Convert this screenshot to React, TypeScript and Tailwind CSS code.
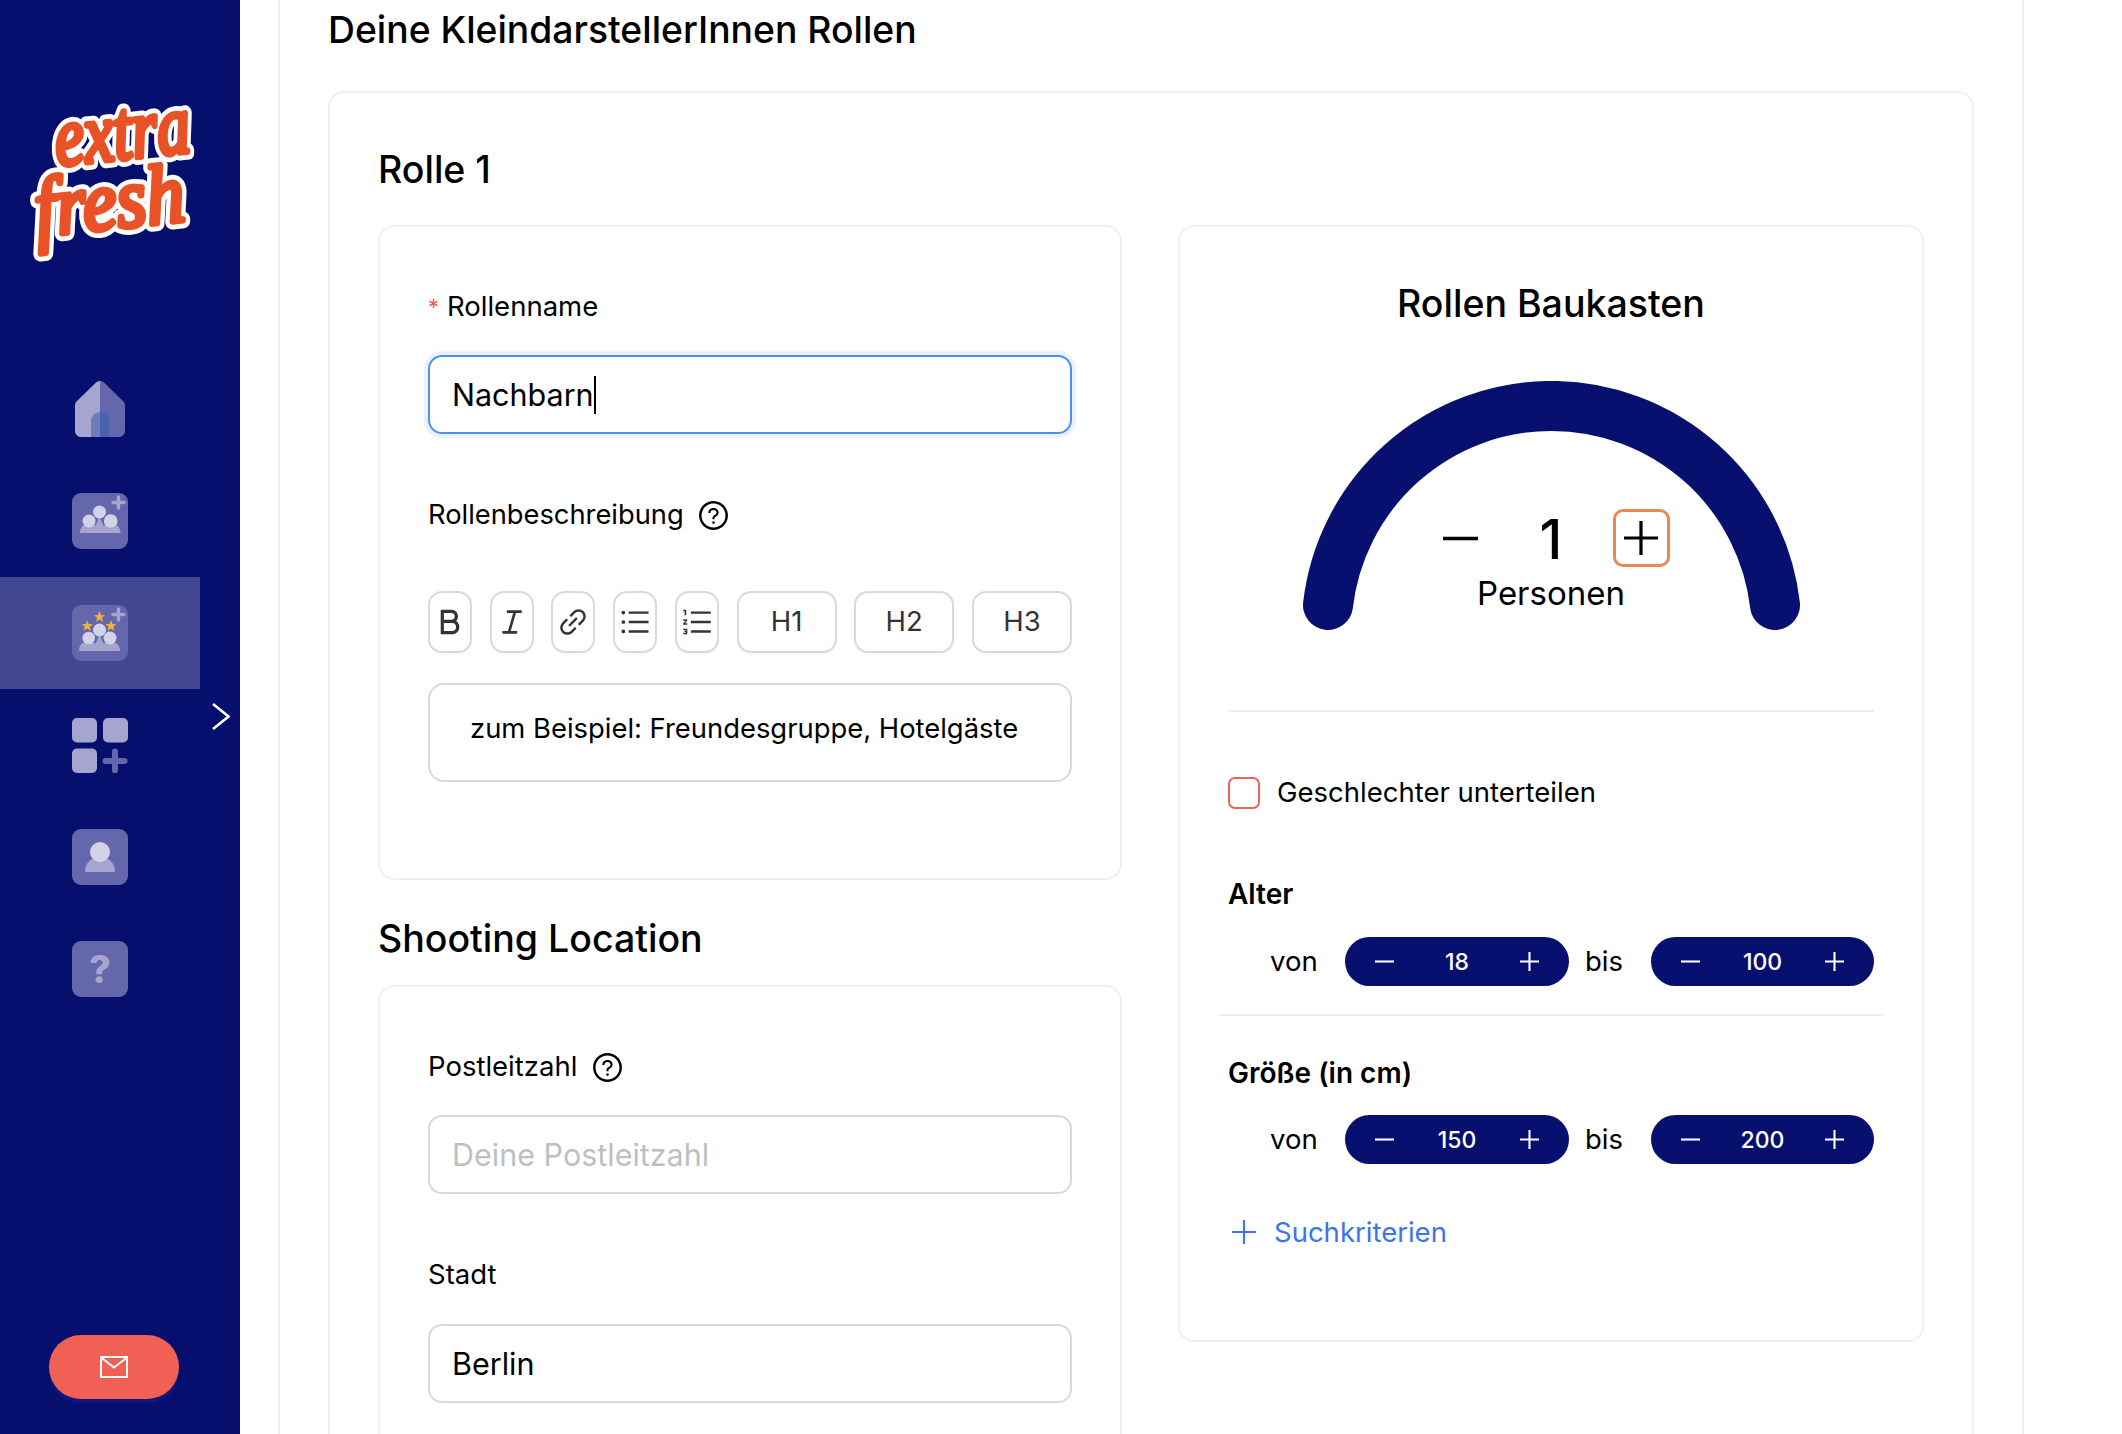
import { ReactNode } from 'react';
import {
  AiOutlineBold,
  AiOutlineItalic,
  AiOutlineLink,
  AiOutlineUnorderedList,
  AiOutlineOrderedList,
  AiOutlineQuestionCircle,
} from 'react-icons/ai';

const LIGHT = '#a5a5cf';
const MID = '#6467ab';
const PALE = '#d3d3e8';

function Logo() {
  const letters = { fontFamily: '"Liberation Serif", serif', fontStyle: 'italic', fontWeight: 400 };
  return (
    <svg width="240" height="353" viewBox="0 0 240 353" className="block">
      <g transform="rotate(-6 113 180)" style={letters} fontSize="84" strokeLinejoin="round" strokeLinecap="round">
        <text x="59" y="160" fill="#fff" stroke="#fff" strokeWidth="15" textLength="136" lengthAdjust="spacingAndGlyphs">extra</text>
        <text x="32" y="228" fill="#fff" stroke="#fff" strokeWidth="15" textLength="150" lengthAdjust="spacingAndGlyphs">fresh</text>
        <text x="59" y="160" fill="#e85226" stroke="#e85226" strokeWidth="5.500" textLength="136" lengthAdjust="spacingAndGlyphs">extra</text>
        <text x="32" y="228" fill="#e85226" stroke="#e85226" strokeWidth="5.500" textLength="150" lengthAdjust="spacingAndGlyphs">fresh</text>
      </g>
    </svg>
  );
}

function HomeIcon() {
  return (
    <svg width="50" height="56" viewBox="0 0 50 56">
      <path d="M25 0c-1.500 0-3 .6-4 1.600L2 20c-1.300 1.300-2 2.800-2 4.500V50c0 3.300 2.700 6 6 6h19z" fill={LIGHT} />
      <path d="M25 0c1.500 0 3 .6 4 1.600L48 20c1.300 1.300 2 2.800 2 4.500V50c0 3.300-2.700 6-6 6H25z" fill={MID} />
      <path d="M16 56V40c0-5 4-9 9-9v25z" fill="#6b7dba" />
      <path d="M34 56V40c0-5-4-9-9-9v25z" fill="#4a62ae" />
    </svg>
  );
}

function CornerPlus() {
  return <path d="M46.500 4v11M41 9.500h11" stroke={LIGHT} strokeWidth="3.500" strokeLinecap="round" fill="none" />;
}

function GroupAddIcon() {
  return (
    <svg width="56" height="56" viewBox="0 0 56 56">
      <rect width="56" height="56" rx="9" fill={MID} />
      <CornerPlus />
      <path d="M20 40l7.500-16 7.500 16z" fill={LIGHT} />
      <path d="M8 40c0-6 3.500-9.500 9.500-9.500S27 34 27 40zM29 40c0-6 3.500-9.500 9.500-9.500S48.500 34 48.500 40z" fill={LIGHT} />
      <circle cx="27.500" cy="19" r="6.500" fill={PALE} />
      <circle cx="17" cy="28" r="6.500" fill={PALE} />
      <circle cx="38.700" cy="28" r="6.800" fill={PALE} />
    </svg>
  );
}

function Star({ x, y }: { x: number; y: number }) {
  return (
    <polygon
      transform={`translate(${x} ${y}) scale(0.58)`}
      points="0,-10 2.600,-3.300 9.500,-3.100 4.100,1.300 5.900,8.100 0,4.200 -5.900,8.100 -4.100,1.300 -9.500,-3.100 -2.600,-3.300"
      fill="#f5b335"
    />
  );
}

function GroupStarsIcon() {
  return (
    <svg width="56" height="56" viewBox="0 0 56 56">
      <rect width="56" height="56" rx="9" fill={MID} />
      <CornerPlus />
      <Star x={27.5} y={12} />
      <Star x={15.3} y={21} />
      <Star x={39} y={21} />
      <path d="M20 46l7.500-16 7.500 16z" fill={LIGHT} />
      <path d="M7 46c0-6 3.500-9.500 9.500-9.500S26 40 26 46zM28.500 46c0-6 3.500-9.500 9.500-9.500S48 40 48 46z" fill={LIGHT} />
      <circle cx="27.500" cy="25" r="6.500" fill={PALE} />
      <circle cx="16.700" cy="33" r="6.300" fill={PALE} />
      <circle cx="38" cy="33" r="6.500" fill={PALE} />
    </svg>
  );
}

function GridIcon() {
  return (
    <svg width="56" height="55" viewBox="0 0 56 55">
      <rect x="0" y="0" width="25" height="24.500" rx="5" fill={LIGHT} />
      <rect x="31" y="0" width="25" height="24.500" rx="5" fill={LIGHT} />
      <rect x="0" y="30.500" width="25" height="24.500" rx="5" fill={LIGHT} />
      <path d="M43 33.500v19M33.500 43h19" stroke={MID} strokeWidth="6" strokeLinecap="round" />
    </svg>
  );
}

function PersonIcon() {
  return (
    <svg width="56" height="56" viewBox="0 0 56 56">
      <rect width="56" height="56" rx="9" fill={MID} />
      <path d="M13 43c0-9 6-15 15-15s15 6 15 15z" fill={LIGHT} />
      <circle cx="28" cy="23" r="10" fill={PALE} />
    </svg>
  );
}

function HelpIcon() {
  return (
    <div className="w-[56px] h-[56px] rounded-[9px] bg-[#6467ab] flex items-center justify-center text-[#a5a5cf] text-[38px] font-extrabold leading-none">
      ?
    </div>
  );
}

function Chevron() {
  return (
    <svg width="18" height="27" viewBox="0 0 18 27" className="absolute left-[212px] top-[703px]">
      <path d="M1 1l15.500 12.500L1 26" fill="none" stroke="#fff" strokeWidth="2.500" />
    </svg>
  );
}

function Sidebar() {
  return (
    <aside className="relative w-[240px] shrink-0 h-full bg-[#060f6d] flex flex-col">
      <Logo />
      <nav className="w-[200px] flex flex-col">
        <div className="h-[112px] flex items-center justify-center"><HomeIcon /></div>
        <div className="h-[112px] flex items-center justify-center"><GroupAddIcon /></div>
        <div className="h-[112px] flex items-center justify-center bg-[#414791]"><GroupStarsIcon /></div>
        <div className="h-[112px] flex items-center justify-center"><GridIcon /></div>
        <div className="h-[112px] flex items-center justify-center"><PersonIcon /></div>
        <div className="h-[112px] flex items-center justify-center"><HelpIcon /></div>
      </nav>
      <Chevron />
      <div className="mt-auto mb-[35px] ml-[49px] w-[130px] h-[64px] rounded-full bg-[#f06055] shadow-[0_4px_0_#10197a] flex items-center justify-center">
        <svg width="28" height="22" viewBox="0 0 28 22" fill="none" stroke="#fff" strokeWidth="2">
          <rect x="1" y="1" width="26" height="20" />
          <path d="M1 1.500l13 10 13-10" />
        </svg>
      </div>
    </aside>
  );
}

function Help() {
  return <AiOutlineQuestionCircle size={33} className="text-black" />;
}

function ToolBtn({ children, wide }: { children: ReactNode; wide?: boolean }) {
  return (
    <div
      className={`${wide ? 'w-[100px]' : 'w-[44px]'} h-[62px] rounded-[14px] border-2 border-[#d9d9d9] bg-white shadow-[0_2px_0_rgba(0,0,0,0.02)] flex items-center justify-center text-[#333] text-[27.500px]`}
    >
      {children}
    </div>
  );
}

function RoleNameCard() {
  return (
    <section className="rounded-[16px] border-2 border-[#f0f0f0] px-[48px] pt-[62px] pb-[96px]">
      <div className="h-[36px] flex items-center text-[27.500px] text-black">
        <span className="text-[#f5584d] w-[19px] text-[22px]">*</span>
        <span>Rollenname</span>
      </div>
      <div className="mt-[30px] h-[79px] rounded-[14px] border-2 border-[#4f8ff0] shadow-[0_0_0_4px_#e9f2fe] pl-[22px] flex items-center text-[30.500px] text-black">
        Nachbarn
        <span className="w-[2px] h-[38px] bg-black" />
      </div>
      <div className="mt-[63px] h-[36px] flex items-center gap-[13px] text-[27.300px] text-black">
        Rollenbeschreibung
        <Help />
      </div>
      <div className="mt-[58px] flex justify-between">
        <ToolBtn><AiOutlineBold size={34} /></ToolBtn>
        <ToolBtn><AiOutlineItalic size={34} /></ToolBtn>
        <ToolBtn><AiOutlineLink size={34} /></ToolBtn>
        <ToolBtn><AiOutlineUnorderedList size={34} /></ToolBtn>
        <ToolBtn><AiOutlineOrderedList size={34} /></ToolBtn>
        <ToolBtn wide>H1</ToolBtn>
        <ToolBtn wide>H2</ToolBtn>
        <ToolBtn wide>H3</ToolBtn>
      </div>
      <div className="mt-[30px] h-[99px] rounded-[16px] border-2 border-[#d9d9d9] pl-[40px] pb-[8px] flex items-center text-[27.400px] text-black whitespace-nowrap">
        zum Beispiel: Freundesgruppe, Hotelgäste
      </div>
    </section>
  );
}

function LocationCard() {
  return (
    <section className="rounded-[16px] border-2 border-[#f0f0f0] px-[48px] pt-[62px] pb-[60px]">
      <div className="h-[36px] flex items-center gap-[14px] text-[27.500px] text-black">
        Postleitzahl
        <Help />
      </div>
      <input
        placeholder="Deine Postleitzahl"
        className="mt-[30px] block w-full h-[79px] rounded-[14px] border-2 border-[#d9d9d9] px-[22px] text-[30.500px] text-black placeholder:text-[#bfbfbf] outline-none"
      />
      <div className="mt-[63px] h-[36px] flex items-center text-[27.500px] text-black">Stadt</div>
      <input
        defaultValue="Berlin"
        className="mt-[31px] block w-full h-[79px] rounded-[14px] border-2 border-[#d9d9d9] px-[22px] text-[30.500px] text-black outline-none"
      />
    </section>
  );
}

function Glyph({ d, size, color, width }: { d: string; size: number; color: string; width: number }) {
  return (
    <svg width={size} height={size} viewBox="0 0 20 20" fill="none" stroke={color} strokeWidth={width}>
      <path d={d} />
    </svg>
  );
}

const PLUS = 'M0 10h20M10 0v20';
const MINUS = 'M0 10h20';

function Stepper({ value, width }: { value: number; width: string }) {
  return (
    <div className={`${width} h-[49px] rounded-full bg-[#07106f] flex items-center justify-between px-[30px] text-white text-[23px] font-medium`}>
      <Glyph d={MINUS} size={19} color="#fff" width={2.2} />
      <span>{value}</span>
      <Glyph d={PLUS} size={19} color="#fff" width={2.2} />
    </div>
  );
}

function RangeRow({ from, to }: { from: number; to: number }) {
  return (
    <div className="flex items-center text-[27.500px] text-black">
      <span className="w-[117px] pl-[42px]">von</span>
      <Stepper value={from} width="w-[224px]" />
      <span className="w-[82px] pl-[16px]">bis</span>
      <Stepper value={to} width="w-[223px]" />
    </div>
  );
}

function Gauge() {
  return (
    <div className="relative mt-[55px] mx-auto w-[497px] h-[250px]">
      <svg width="497" height="250" viewBox="0 0 497 250" fill="none">
        <path d="M25 224A225 225 0 0 1 472 224" stroke="#07106f" strokeWidth="50" strokeLinecap="round" />
      </svg>
      <div className="absolute left-0 right-0 top-[128px] flex flex-col items-center">
        <div className="relative w-full h-[58px]">
          <div className="absolute left-[140px] top-[12px]">
            <Glyph d={MINUS} size={35} color="#000" width={2} />
          </div>
          <span className="absolute left-0 right-0 top-[1px] h-[58px] leading-[58px] text-center text-[55px] font-medium text-black">1</span>
          <div className="absolute left-[310px] top-0 w-[57px] h-[58px] rounded-[10px] border-[3px] border-[#e8894f] flex items-center justify-center">
            <Glyph d={PLUS} size={34} color="#000" width={1.9} />
          </div>
        </div>
        <div className="h-[40px] mt-[6px] leading-[40px] text-[33px] text-black">Personen</div>
      </div>
    </div>
  );
}

function BuilderCard() {
  return (
    <section className="rounded-[16px] border-2 border-[#f0f0f0] px-[48px] pt-[55px] pb-[90px]">
      <h3 className="h-[44px] leading-[44px] text-center text-[37.500px] font-medium text-black">Rollen Baukasten</h3>
      <Gauge />
      <div className="mt-[79px] h-[2px] bg-[#eeeeee]" />
      <div className="mt-[60px] flex items-center gap-[17px] text-[27.500px] text-black">
        <div className="w-[32px] h-[32px] rounded-[7px] border-2 border-[#f0635a]" />
        Geschlechter unterteilen
      </div>
      <div className="mt-[63px] h-[36px] leading-[36px] text-[28px] font-semibold text-black">Alter</div>
      <div className="mt-[25px]"><RangeRow from={18} to={100} /></div>
      <div className="mt-[28px] -mx-[9px] h-[2px] bg-[#f0f0f0]" />
      <div className="mt-[39px] h-[36px] leading-[36px] text-[28px] font-semibold text-black">Größe (in cm)</div>
      <div className="mt-[24px]"><RangeRow from={150} to={200} /></div>
      <div className="mt-[50px] h-[36px] flex items-center gap-[18px] pl-[4px] text-[27.500px] text-[#3b74f0]">
        <Glyph d={PLUS} size={24} color="#3b74f0" width={1.8} />
        Suchkriterien
      </div>
    </section>
  );
}

export default function App() {
  return (
    <div className="h-screen w-full flex overflow-hidden bg-white font-['Inter',sans-serif]">
      <Sidebar />
      <main className="ml-[38px] w-[1746px] shrink-0 h-full border-x-2 border-[#eeeeee] px-[48px]">
        <h1 className="h-[60px] leading-[60px] text-[37.300px] font-medium text-black">Deine KleindarstellerInnen Rollen</h1>
        <div className="mt-[31px] rounded-[16px] border-2 border-[#f0f0f0] px-[48px]">
          <h2 className="mt-[55px] h-[44px] leading-[44px] text-[37.500px] font-medium text-black">Rolle 1</h2>
          <div className="mt-[33px] grid grid-cols-[744px_746px] gap-[56px] items-start">
            <div className="flex flex-col">
              <RoleNameCard />
              <h2 className="mt-[37px] h-[44px] leading-[44px] text-[37.500px] font-medium text-black">Shooting Location</h2>
              <div className="mt-[24px]">
                <LocationCard />
              </div>
            </div>
            <BuilderCard />
          </div>
        </div>
      </main>
    </div>
  );
}
